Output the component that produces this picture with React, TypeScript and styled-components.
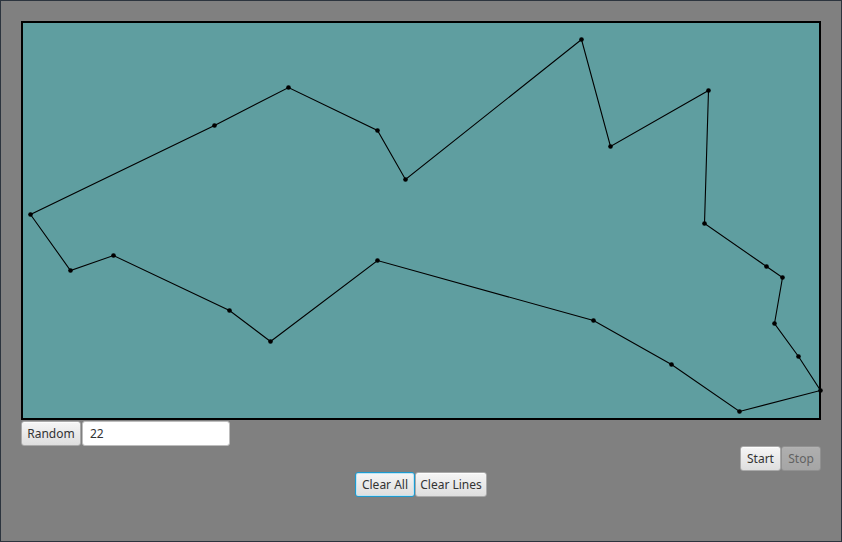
import React from "react";
import styled, { createGlobalStyle } from "styled-components";

const Global = createGlobalStyle`
  html, body { margin: 0; padding: 0; background: #808080; }
  * { box-sizing: border-box; }
`;

const Frame = styled.div`
  width: 842px;
  height: 542px;
  border: 1px solid #2c343e;
  background: #808080;
  padding: 20px 20px 0 20px;
  display: flex;
  flex-direction: column;
  font-family: "Noto Sans", "Open Sans", sans-serif;
  font-size: 12px;
`;

const Board = styled.div`
  position: relative;
  width: 800px;
  height: 399px;
  border: 2px solid #000;
  background: #5f9ea0;
  flex: none;
`;

const Drawing = styled.svg`
  position: absolute;
  left: 0;
  top: 0;
  overflow: visible;
`;

const Row = styled.div<{ $justify: string; $top: number }>`
  display: flex;
  justify-content: ${(p) => p.$justify};
  margin-top: ${(p) => p.$top}px;
  height: 25px;
`;

const Button = styled.button<{ $w: number; $focused?: boolean }>`
  width: ${(p) => p.$w}px;
  height: 25px;
  padding: 0;
  margin: 0;
  font-family: inherit;
  font-size: 12px;
  color: #333;
  border-radius: 3px;
  border: 1px solid ${(p) => (p.$focused ? "#1c9bd0" : "#a9a9a9")};
  box-shadow: ${(p) => (p.$focused ? "inset 0 0 0 1px #bfe3f3" : "inset 0 1px 0 #fdfdfd")};
  background: linear-gradient(#f6f6f6, #dedede);
  cursor: default;
  &:disabled {
    opacity: 0.4;
    color: #333;
  }
`;

const Field = styled.input`
  width: 148px;
  height: 25px;
  margin-left: 1px;
  padding: 0 7px;
  border: 1px solid #bdbdbd;
  border-radius: 3px;
  background: #fff;
  font-family: inherit;
  font-size: 12px;
  color: #333;
  outline: none;
`;

const pts: [number, number][] = [
  [30, 214], [70, 270], [113, 255], [229, 310], [270, 341], [377, 260],
  [593, 320], [671, 364], [739, 411], [820, 390], [798, 356], [774, 323],
  [782, 277], [766, 266], [704, 223], [708, 90], [610, 146], [581, 39],
  [405, 179], [377, 130], [288, 87], [214, 125],
];

export default function App() {
  const local = pts.map(([x, y]) => [x - 22.5, y - 22.5] as [number, number]);
  const poly = local.map(([x, y]) => `${x},${y}`).join(" ");
  return (
    <>
      <Global />
      <Frame>
        <Board>
          <Drawing width={796} height={395}>
            <polygon points={poly} fill="none" stroke="#000" strokeWidth={1.1} />
            {local.map(([x, y], i) => (
              <circle key={i} cx={x} cy={y} r={2.3} fill="#000" />
            ))}
          </Drawing>
        </Board>
        <Row $justify="flex-start" $top={1}>
          <Button $w={60}>Random</Button>
          <Field defaultValue="22" />
        </Row>
        <Row $justify="flex-end" $top={0}>
          <Button $w={41}>Start</Button>
          <Button $w={40} disabled>Stop</Button>
        </Row>
        <Row $justify="center" $top={1}>
          <Button $w={60} $focused>Clear All</Button>
          <Button $w={72}>Clear Lines</Button>
        </Row>
      </Frame>
    </>
  );
}
